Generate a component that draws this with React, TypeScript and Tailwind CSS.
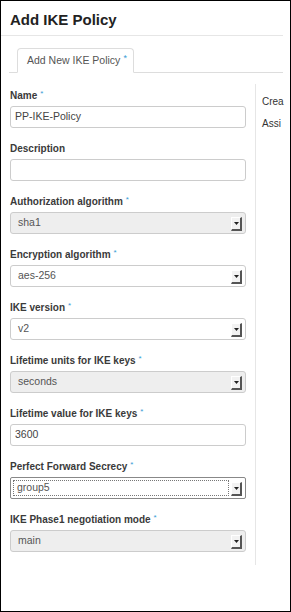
import React from "react";

type Field = {
  label: string;
  required?: boolean;
  kind: "input" | "select";
  value: string;
  gray?: boolean;
  focus?: boolean;
};

const fields: Field[] = [
  { label: "Name", required: true, kind: "input", value: "PP-IKE-Policy" },
  { label: "Description", kind: "input", value: "" },
  { label: "Authorization algorithm", required: true, kind: "select", value: "sha1", gray: true },
  { label: "Encryption algorithm", required: true, kind: "select", value: "aes-256" },
  { label: "IKE version", required: true, kind: "select", value: "v2" },
  { label: "Lifetime units for IKE keys", required: true, kind: "select", value: "seconds", gray: true },
  { label: "Lifetime value for IKE keys", required: true, kind: "input", value: "3600" },
  { label: "Perfect Forward Secrecy", required: true, kind: "select", value: "group5", focus: true },
  { label: "IKE Phase1 negotiation mode", required: true, kind: "select", value: "main", gray: true },
];

function Arrow() {
  return (
    <div className="absolute right-[3px] top-[4px] w-[11px] h-[14px] border-r-2 border-b-2 border-r-[#555] border-b-[#555] border-l border-t border-l-white border-t-white bg-[#f2f2f2] flex items-center justify-center">
      <svg width="5" height="3" viewBox="0 0 5 3">
        <path d="M0 0 L5 0 L2.5 3 Z" fill="#222" />
      </svg>
    </div>
  );
}

function Control({ f }: { f: Field }) {
  if (f.kind === "input") {
    return (
      <div className="h-[22px] w-[236px] border border-[#ccc] rounded-[3px] bg-white flex items-center pl-[4px] text-[10.5px] text-[#444]">
        {f.value}
      </div>
    );
  }
  if (f.focus) {
    return (
      <div className="relative h-[22px] w-[236px] border border-[#888] rounded-[2px] bg-white flex items-center pl-[2px] pr-[16px] text-[10.5px] text-[#555]">
        <div className="h-[16px] w-full border border-dotted border-[#777] flex items-center pl-[3px]">
          {f.value}
        </div>
        <Arrow />
      </div>
    );
  }
  return (
    <div
      className={`relative h-[22px] w-[236px] border border-[#ccc] rounded-[3px] flex items-center pl-[7px] text-[10.5px] text-[#555] ${
        f.gray ? "bg-[#eeeeee]" : "bg-white"
      }`}
    >
      {f.value}
      <Arrow />
    </div>
  );
}

export default function App() {
  return (
    <div
      className="w-[291px] h-[612px] border border-black bg-white overflow-hidden text-[#333]"
      style={{ fontFamily: '"Liberation Sans", Arial, sans-serif' }}
    >
      <div className="mr-[7px] h-[35px] border-b border-[#e6e6e6] pl-[9px] pt-[10px]">
        <h1 className="text-[15px] leading-[17px] font-bold text-[#222]">Add IKE Policy</h1>
      </div>
      <div className="mt-[12px] ml-[8px] mr-[7px] border-b border-[#ddd] flex pl-[8px]">
        <div className="h-[25px] w-[117px] -mb-px border border-[#ddd] border-b-white rounded-t-[4px] bg-white flex items-center pl-[9px] text-[10.5px] text-[#555] whitespace-nowrap">
          Add New IKE Policy<span className="ml-[3px] text-[9px] text-[#3a9bd5] -mt-[4px]">*</span>
        </div>
      </div>
      <div className="flex">
        <div className="pl-[9px] pt-[15px] w-[245px]">
          {fields.map((f) => (
            <div key={f.label} className="mb-[13px]">
              <div className="h-[15px] mb-[3px] flex items-center text-[10px] font-bold text-[#3a3a3a] whitespace-nowrap">
                {f.label}
                {f.required && (
                  <span className="ml-[3px] text-[8px] text-[#3a9bd5] font-normal -mt-[4px]">*</span>
                )}
              </div>
              <Control f={f} />
            </div>
          ))}
        </div>
        <div className="ml-[9px] mt-[11px] h-[481px] border-l border-[#e6e6e6] pl-[6px] pt-[7px] text-[10px] leading-[22px] text-[#333]">
          <div>Crea</div>
          <div>Assi</div>
        </div>
      </div>
    </div>
  );
}
